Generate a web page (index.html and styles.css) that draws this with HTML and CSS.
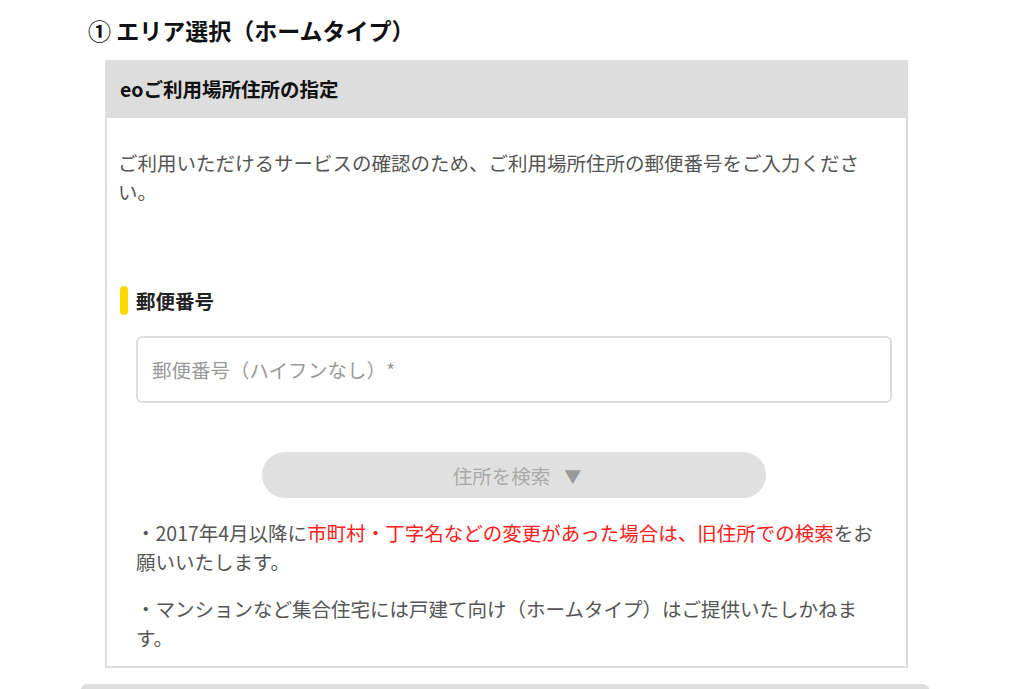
FILE: index.html
```html
<!DOCTYPE html>
<html lang="ja">
<head>
<meta charset="utf-8">
<title>エリア選択</title>
<link rel="stylesheet" href="styles.css">
</head>
<body>
<div class="page">
  <h1 class="title">① エリア選択（ホームタイプ）</h1>
  <section class="box">
    <div class="box-head">eoご利用場所住所の指定</div>
    <div class="box-body">
      <p class="lead">ご利用いただけるサービスの確認のため、ご利用場所住所の郵便番号をご入力ください。</p>
      <div class="field-label"><span class="field-bar"></span>郵便番号</div>
      <div class="form">
        <div class="input">郵便番号（ハイフンなし）*</div>
        <div class="search-btn">住所を検索<span class="tri">▼</span></div>
        <div class="notes">
          <p>・2017年4月以降に<span class="red">市町村・丁字名などの変更があった場合は、旧住所での検索</span>をお願いいたします。</p>
          <p class="note2">・マンションなど集合住宅には戸建て向け（ホームタイプ）はご提供いたしかねます。</p>
        </div>
      </div>
    </div>
  </section>
  <div class="next-bar"></div>
</div>
</body>
</html>
```

FILE: styles.css
```css
html, body {
  margin: 0;
  padding: 0;
  background: #ffffff;
}
body {
  font-family: "Noto Sans CJK JP", "Noto Sans", sans-serif;
  color: #555555;
  overflow: hidden;
}
.page {
  width: 1024px;
  height: 689px;
  overflow: hidden;
}
.title {
  margin: 0;
  padding: 15px 0 0 88px;
  font-size: 23px;
  line-height: 30px;
  font-weight: bold;
  color: #111111;
  height: 30px;
  margin-bottom: 15px;
}
.box {
  margin-left: 105px;
  width: 803px;
  box-sizing: border-box;
  border: 2px solid #dddddd;
}
.box-head {
  height: 56px;
  background: #dddddd;
  display: flex;
  align-items: center;
  padding-left: 13px;
  padding-bottom: 4px;
  box-sizing: border-box;
  font-size: 19.5px;
  font-weight: bold;
  color: #111111;
}
.box-body {
  padding: 30px 14px 14px 11px;
  font-size: 19.5px;
  line-height: 29px;
}
.lead {
  margin: 0;
}
.field-label {
  margin-top: 80px;
  margin-left: 2px;
  display: flex;
  align-items: center;
  height: 29px;
  font-weight: bold;
  color: #222222;
}
.field-bar {
  width: 8px;
  height: 29px;
  background: #ffd800;
  border-radius: 4px;
  margin-right: 8px;
}
.form {
  padding-left: 18px;
}
.input {
  margin-top: 21px;
  height: 67px;
  box-sizing: border-box;
  border: 2px solid #dddddd;
  border-radius: 6px;
  padding-left: 14px;
  display: flex;
  align-items: center;
  color: #999999;
}
.search-btn {
  margin: 49px auto 0;
  width: 504px;
  height: 46px;
  border-radius: 23px;
  background: #e0e0e0;
  color: #aaaaaa;
  display: flex;
  align-items: center;
  justify-content: center;
  padding-left: 6px;
  box-sizing: border-box;
}
.tri {
  margin-left: 14px;
  font-size: 17px;
  color: #999999;
}
.notes {
  margin-top: 20px;
  padding-right: 6px;
}
.notes p {
  margin: 0;
}
.notes .note2 {
  margin-top: 18px;
}
.red {
  color: #ff2020;
}
.next-bar {
  margin-top: 16px;
  margin-left: 80px;
  width: 850px;
  height: 20px;
  background: #dddddd;
  border-radius: 8px 8px 0 0;
}
```
